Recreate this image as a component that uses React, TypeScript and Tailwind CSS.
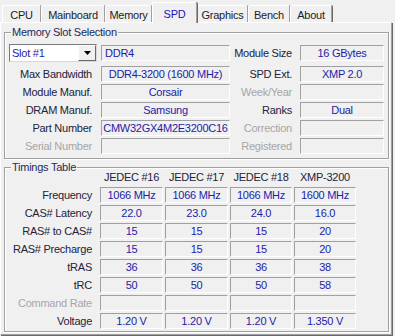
import React from 'react';

const tabs = [
  { name: 'CPU', w: 'w-[39px]' },
  { name: 'Mainboard', w: 'w-[64px]' },
  { name: 'Memory', w: 'w-[47px]' },
  { name: 'SPD', w: 'w-[45px]', active: true },
  { name: 'Graphics', w: 'w-[51px]' },
  { name: 'Bench', w: 'w-[42px]' },
  { name: 'About', w: 'w-[42px]' },
];

const field =
  'h-[16px] border border-t-[#a0a0a0] border-l-[#a0a0a0] border-b-white border-r-white bg-[#f0f0f0] leading-[14px] whitespace-nowrap overflow-hidden text-[#1c1ca8]';
const lbl = 'text-right leading-[16px] whitespace-nowrap text-[#22223c]';
const dim = 'text-right leading-[16px] whitespace-nowrap text-[#a6a6a6]';

const slotRows = [
  { l: 'Max Bandwidth', v: 'DDR4-3200 (1600 MHz)', rl: 'SPD Ext.', rv: 'XMP 2.0' },
  { l: 'Module Manuf.', v: 'Corsair', rl: 'Week/Year', rv: '', rdim: true },
  { l: 'DRAM Manuf.', v: 'Samsung', rl: 'Ranks', rv: 'Dual' },
  { l: 'Part Number', v: 'CMW32GX4M2E3200C16', rl: 'Correction', rv: '', rdim: true },
  { l: 'Serial Number', v: '', ldim: true, rl: 'Registered', rv: '', rdim: true },
];

const timings = [
  { l: 'Frequency', v: ['1066 MHz', '1066 MHz', '1066 MHz', '1600 MHz'] },
  { l: 'CAS# Latency', v: ['22.0', '23.0', '24.0', '16.0'] },
  { l: 'RAS# to CAS#', v: ['15', '15', '15', '20'] },
  { l: 'RAS# Precharge', v: ['15', '15', '15', '20'] },
  { l: 'tRAS', v: ['36', '36', '36', '38'] },
  { l: 'tRC', v: ['50', '50', '50', '58'] },
  { l: 'Command Rate', v: ['', '', '', ''], dim: true },
  { l: 'Voltage', v: ['1.20 V', '1.20 V', '1.20 V', '1.350 V'] },
];

const Group = ({ title, className, children }: { title: string; className: string; children: React.ReactNode }) => (
  <div
    className={`relative border border-[#a0a0a0] shadow-[inset_1px_1px_0_#fff,1px_1px_0_#fff] ${className}`}
  >
    <span className="absolute left-[6px] -top-[8px] bg-[#f0f0f0] px-[1px] leading-[14px] text-[#1e2a5a]">
      {title}
    </span>
    {children}
  </div>
);

export default function App() {
  return (
    <div
      className="w-[395px] h-[336px] bg-[#f0f0f0] text-[11px] tracking-[-0.25px] overflow-hidden"
      style={{ fontFamily: '"Liberation Sans", Arial, sans-serif' }}
    >
      {/* tab strip */}
      <div className="h-[22px] flex items-end pl-[2px]">
        {tabs.map((t) =>
          t.active ? (
            <div
              key={t.name}
              className={`${t.w} h-[21px] -mb-[1px] relative z-10 bg-[#f0f0f0] border-t border-l border-white border-r border-r-[#a0a0a0] shadow-[1px_0_0_#696969] rounded-t-[2px] text-center pt-[5px] leading-[13px] text-[#1414c8]`}
            >
              {t.name}
            </div>
          ) : (
            <div
              key={t.name}
              className={`${t.w} h-[17px] border-t border-l border-white border-r border-r-[#a0a0a0] shadow-[1px_0_0_#696969] rounded-t-[2px] text-center pt-[3px] leading-[13px] text-[#1c1c1c]`}
            >
              {t.name}
            </div>
          )
        )}
      </div>

      {/* panel */}
      <div className="w-[392px] h-[313px] border-t border-l border-white border-r border-b border-r-[#a0a0a0] border-b-[#a0a0a0] shadow-[1px_1px_0_#696969] pl-[3px] pr-[2px]">
        <Group title="Memory Slot Selection" className="mt-[9px] h-[127px] w-[385px] pt-[11px]">
          <div className="flex flex-col gap-[2px]">
            <div className="flex h-[18px] mb-[2px]">
              <div className="w-[96px] pl-[4px]">
                <div className="w-[88px] h-[18px] bg-white border border-t-[#7a7a7a] border-l-[#7a7a7a] border-b-[#d8d8d8] border-r-[#d8d8d8] flex">
                  <span className="flex-1 pl-[2px] leading-[16px] text-[#1c1ca8]">Slot #1</span>
                  <span className="w-[18px] h-[16px] bg-[#f0f0f0] border border-t-white border-l-white border-b-[#696969] border-r-[#696969] flex items-center justify-center">
                    <svg width="7" height="4" viewBox="0 0 7 4">
                      <path d="M0 0h7L3.5 4z" fill="#000" />
                    </svg>
                  </span>
                </div>
              </div>
              <div className={`${field} w-[129px] mt-[1px] pl-[3px]`}>DDR4</div>
              <div className={`${lbl} w-[70px] pr-[8px] leading-[18px]`}>Module Size</div>
              <div className={`${field} w-[84px] mt-[1px] text-center`}>16 GBytes</div>
            </div>
            {slotRows.map((r) => (
              <div key={r.l} className="flex h-[16px]">
                <div className={`${r.ldim ? dim : lbl} w-[96px] pr-[9px]`}>{r.l}</div>
                <div className={`${field} w-[129px] text-center`}>{r.v}</div>
                <div className={`${r.rdim ? dim : lbl} w-[70px] pr-[8px]`}>{r.rl}</div>
                <div className={`${field} w-[84px] text-center`}>{r.rv}</div>
              </div>
            ))}
          </div>
        </Group>

        <Group title="Timings Table" className="mt-[8px] h-[165px] w-[385px] pt-[2px]">
          <div className="grid grid-cols-[93px_63px_63px_62px_62px] gap-x-[2px] gap-y-[2px] grid-rows-[15px]">
            <div />
            {['JEDEC #16', 'JEDEC #17', 'JEDEC #18', 'XMP-3200'].map((h) => (
              <div key={h} className="text-center leading-[15px] text-[#22223c] whitespace-nowrap">
                {h}
              </div>
            ))}
            {timings.map((r) => (
              <React.Fragment key={r.l}>
                <div className={`${r.dim ? dim : lbl} pr-[6px]`}>{r.l}</div>
                {r.v.map((v, i) => (
                  <div key={i} className={`${field} text-center`}>
                    {v}
                  </div>
                ))}
              </React.Fragment>
            ))}
          </div>
        </Group>
      </div>
    </div>
  );
}
